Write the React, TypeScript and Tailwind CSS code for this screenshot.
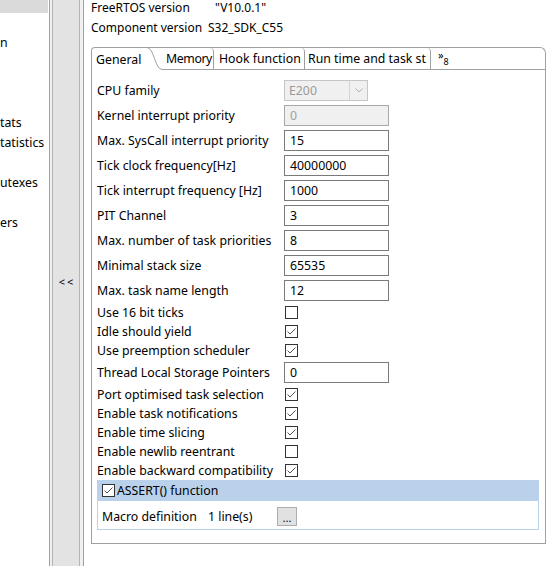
import React from 'react'

type Row =
  | { label: string; kind: 'combo' | 'disabled' | 'text'; value: string }
  | { label: string; kind: 'check'; checked: boolean }

const rows: Row[] = [
  { label: 'CPU family', kind: 'combo', value: 'E200' },
  { label: 'Kernel interrupt priority', kind: 'disabled', value: '0' },
  { label: 'Max. SysCall interrupt priority', kind: 'text', value: '15' },
  { label: 'Tick clock frequency[Hz]', kind: 'text', value: '40000000' },
  { label: 'Tick interrupt frequency [Hz]', kind: 'text', value: '1000' },
  { label: 'PIT Channel', kind: 'text', value: '3' },
  { label: 'Max. number of task priorities', kind: 'text', value: '8' },
  { label: 'Minimal stack size', kind: 'text', value: '65535' },
  { label: 'Max. task name length', kind: 'text', value: '12' },
  { label: 'Use 16 bit ticks', kind: 'check', checked: false },
  { label: 'Idle should yield', kind: 'check', checked: true },
  { label: 'Use preemption scheduler', kind: 'check', checked: true },
  { label: 'Thread Local Storage Pointers', kind: 'text', value: '0' },
  { label: 'Port optimised task selection', kind: 'check', checked: true },
  { label: 'Enable task notifications', kind: 'check', checked: true },
  { label: 'Enable time slicing', kind: 'check', checked: true },
  { label: 'Enable newlib reentrant', kind: 'check', checked: false },
  { label: 'Enable backward compatibility', kind: 'check', checked: true },
]

// left tree, only the tail of each item is visible
const tree = ['', '', 'n', '', '', '', 'tats', 'tatistics', '', 'utexes', '', 'ers', '', '', '', '', '', '', '', '', '', '', '', '', '', '', '', '', '']

function Check({ checked }: { checked: boolean }) {
  return (
    <svg width="13" height="13" viewBox="0 0 13 13" className="shrink-0">
      <rect x="0.5" y="0.5" width="12" height="12" fill="white" stroke="#333" />
      {checked && <path d="M2.5 6.5 L5 9 L10.5 3.5" fill="none" stroke="#555" strokeWidth="1" />}
    </svg>
  )
}

function Field({ row }: { row: Row }) {
  if (row.kind === 'check') {
    return (
      <div className="flex h-[19px] items-center">
        <div className="relative top-[1px] w-[188px] shrink-0 whitespace-nowrap">{row.label}</div>
        <Check checked={row.checked} />
      </div>
    )
  }
  return (
    <div className="flex h-[25px] items-center">
      <div className="relative top-[1px] w-[187px] shrink-0 whitespace-nowrap">{row.label}</div>
      {row.kind === 'combo' && (
        <div className="flex h-[21px] w-[84px] items-center border border-[#c6c6c6] bg-[#f0f0f0] text-[#9a9a9a]">
          <span className="relative top-[1px] flex-1 pl-[4px]">{row.value}</span>
          <span className="flex h-full w-[18px] items-center justify-center border-l border-[#d4d4d4]">
            <svg width="8" height="5" viewBox="0 0 8 5">
              <path d="M0.5 0.5 L4 4 L7.5 0.5" fill="none" stroke="#b0b0b0" />
            </svg>
          </span>
        </div>
      )}
      {row.kind === 'disabled' && (
        <div className="flex h-[21px] w-[105px] items-center border border-[#a8a8a8] bg-[#f0f0f0] pl-[5px] text-[#a0a0a0]">
          <span className="relative top-[1px]">{row.value}</span>
        </div>
      )}
      {row.kind === 'text' && (
        <div className="flex h-[21px] w-[105px] items-center border border-[#7a7a7a] bg-white pl-[5px]">
          <span className="relative top-[1px]">{row.value}</span>
        </div>
      )}
    </div>
  )
}

export default function App() {
  return (
    <div className="flex h-[566px] w-[546px] overflow-hidden bg-white font-['Noto_Sans',sans-serif] text-[12.3px] text-black">
      {/* tree */}
      <div className="w-[49px] shrink-0 overflow-hidden">
        <div className="-mt-[7px]">
          {tree.map((t, i) => (
            <div key={i} className={`flex h-[20px] w-[48px] items-center whitespace-nowrap ${i === 0 ? 'bg-[#dadada]' : ''}`}>
              {t}
            </div>
          ))}
        </div>
      </div>

      {/* splitter */}
      <div className="w-[1px] shrink-0 bg-[#a0a0a0]" />
      <div className="w-[2px] shrink-0 bg-[#f0f0f0]" />
      <div className="w-[1px] shrink-0 bg-[#b4b4b4]" />
      <div className="flex w-[26px] shrink-0 flex-col items-center bg-[#e3e3e3]">
        <div className="mt-[274px] pl-[2px] text-[11px] leading-[16px] tracking-[2px]">&lt;&lt;</div>
      </div>
      <div className="w-[1px] shrink-0 bg-[#b4b4b4]" />
      <div className="w-[3px] shrink-0 bg-[#f0f0f0]" />
      <div className="w-[1px] shrink-0 bg-[#a0a0a0]" />

      {/* editor */}
      <div className="flex min-w-0 flex-1 flex-col pl-[7px]">
        <div className="flex h-[14px] items-center text-[12px] leading-[14px]">
          <span className="relative top-[1px] w-[124px] whitespace-nowrap">FreeRTOS version</span>
          <span className="relative top-[1px]">"V10.0.1"</span>
        </div>
        <div className="mt-[6px] flex h-[14px] items-center text-[12px] leading-[14px]">
          <span className="relative top-[1px] w-[117px] whitespace-nowrap">Component version</span>
          <span className="relative top-[1px]">S32_SDK_C55</span>
        </div>

        {/* tab header */}
        <div className="mt-[13px] flex h-[23px] rounded-tl-[4px] rounded-tr-[6px] border-l border-r border-t border-[#a0a0a0]">
          <div className="flex h-[22px] w-[55px] shrink-0 items-center pl-[4px]">
            <span className="relative top-[1px]">General</span>
          </div>
          <svg width="15" height="22" viewBox="0 0 15 22" className="shrink-0 overflow-visible">
            <path d="M0 -0.5 C 7 -0.5, 8 21.5, 15 21.5" fill="none" stroke="#a0a0a0" />
          </svg>
          <div className="flex h-[22px] w-[52px] shrink-0 items-center rounded-tr-[4px] border-b border-r border-[#a0a0a0] pl-[4px] tracking-[-0.4px]">
            <span className="relative top-[1px]">Memory</span>
          </div>
          <div className="flex h-[22px] w-[91px] shrink-0 items-center whitespace-nowrap rounded-tr-[4px] border-b border-r border-[#a0a0a0] pl-[5px]">
            <span className="relative top-[1px]">Hook function</span>
          </div>
          <div className="flex h-[22px] w-[126px] shrink-0 items-center overflow-hidden whitespace-nowrap rounded-tr-[4px] border-b border-r border-[#a0a0a0] pl-[3px]">
            <span className="relative top-[1px]">Run time and task st</span>
          </div>
          <div className="flex h-[22px] flex-1 border-b border-[#a0a0a0] pl-[7px]">
            <span className="mt-[1px] text-[11px] leading-[12px]">»</span>
            <span className="mt-[9px] text-[9px] leading-[10px]">8</span>
          </div>
        </div>

        {/* tab body */}
        <div className="flex h-[474px] flex-col border-b border-l border-r border-[#a0a0a0] pl-[5px] pr-[6px] pt-[8px]">
          {rows.map(r => (
            <Field key={r.label} row={r} />
          ))}
          <div className="flex h-[21px] items-center bg-[#b9d1ea] pl-[5px]">
            <Check checked />
            <span className="relative top-[1px] ml-[2px]">ASSERT() function</span>
          </div>
          <div className="flex h-[29px] items-center border-b border-l border-r border-[#b9d1ea] pl-[4px] pt-[3px]">
            <span className="relative top-[1px] w-[106px] whitespace-nowrap">Macro definition</span>
            <span className="relative top-[1px] w-[69px] whitespace-nowrap">1 line(s)</span>
            <div className="flex h-[19px] w-[20px] items-end justify-center border border-[#adadad] bg-[#e1e1e1] text-[11px] leading-[14px]">...</div>
          </div>
        </div>
      </div>
    </div>
  )
}
